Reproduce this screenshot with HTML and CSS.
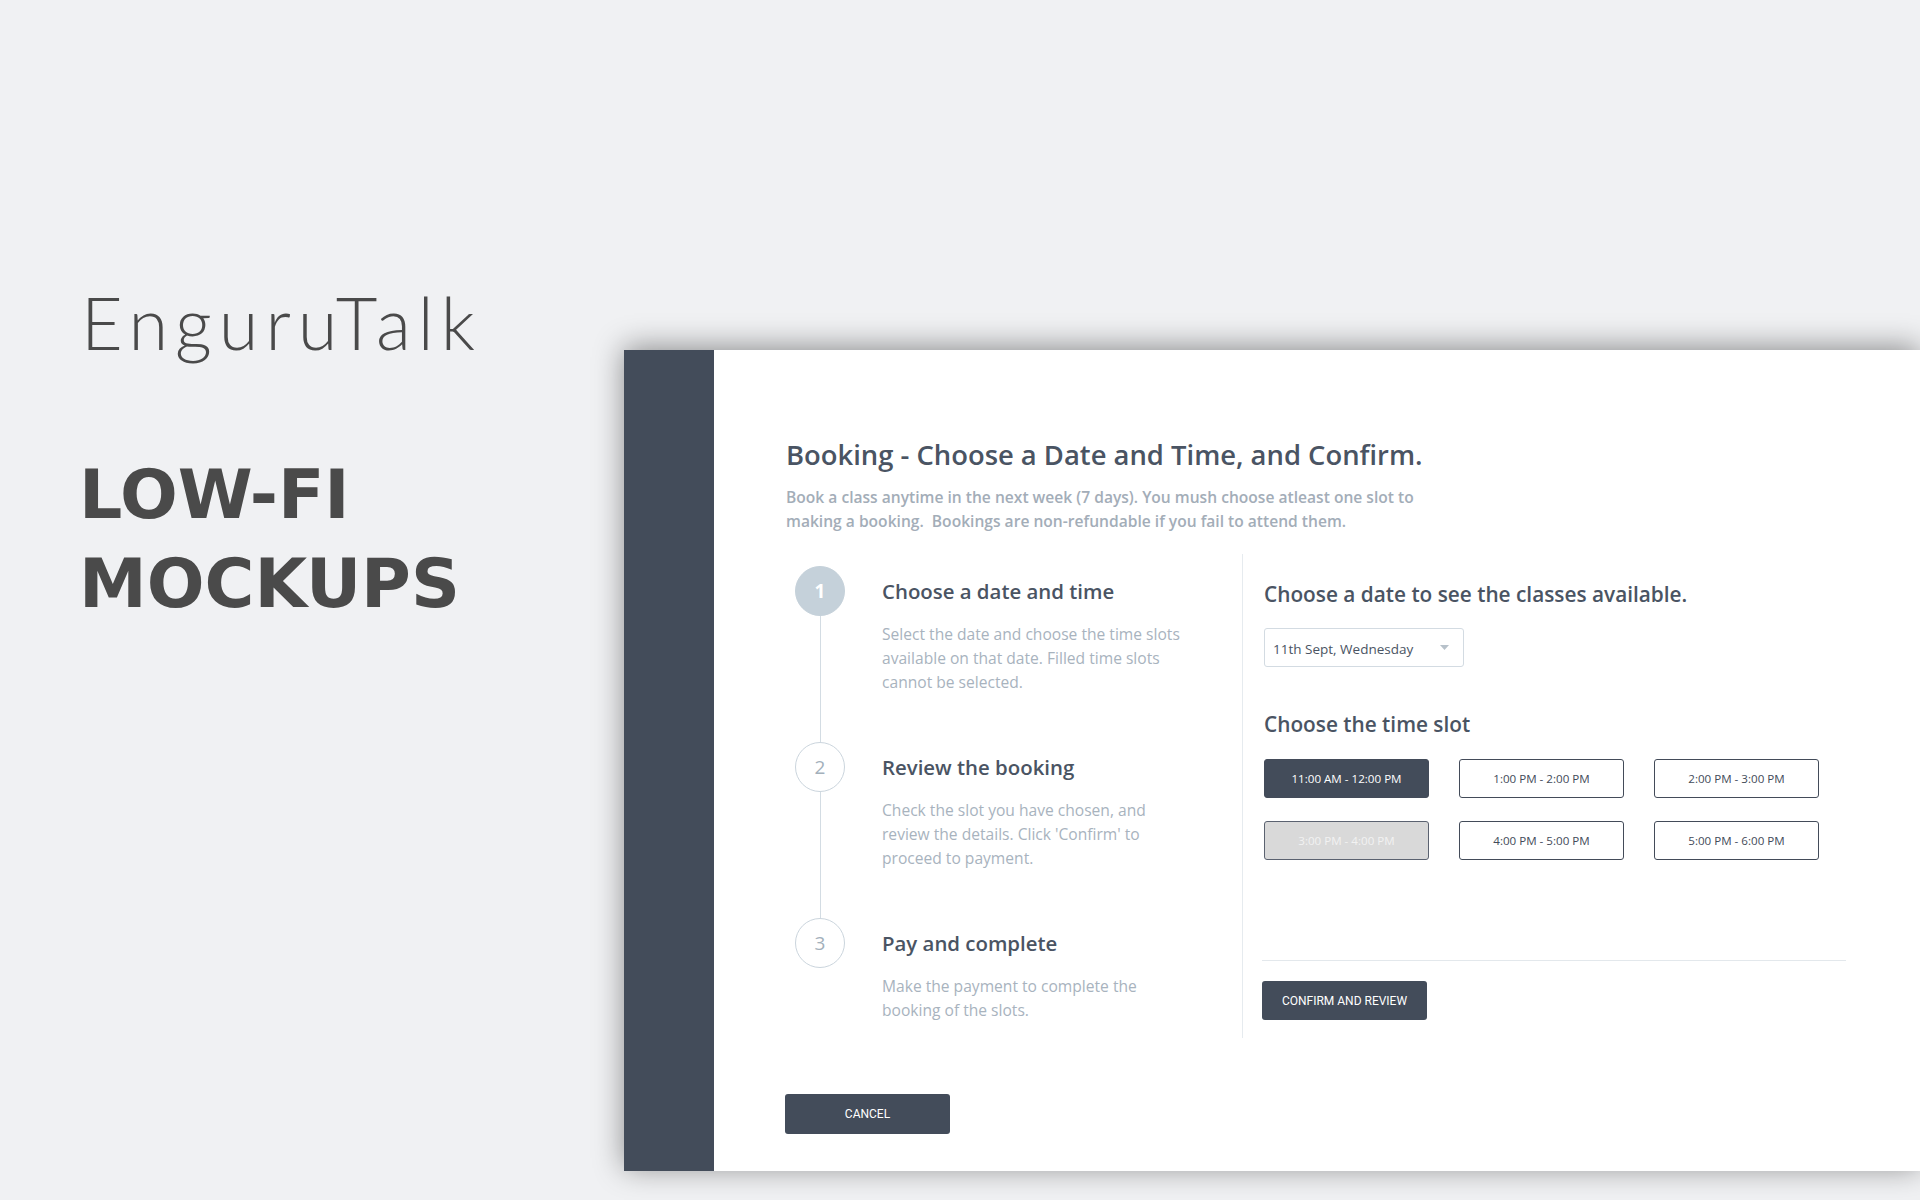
FILE: index.html
```html
<!DOCTYPE html>
<html lang="en">
<head>
<meta charset="utf-8">
<title>EnguruTalk - Low-fi mockups</title>
<link rel="stylesheet" href="styles.css">
</head>
<body>
<div class="page">
  <section class="hero">
    <div class="brand">EnguruTalk</div>
    <h2 class="hero-title">LOW-FI<br>MOCKUPS</h2>
  </section>

  <section class="card">
    <aside class="sidebar"></aside>
    <main class="content">
      <h1 class="title">Booking - Choose a Date and Time, and Confirm.</h1>
      <p class="subtitle">Book a class anytime in the next week (7 days). You mush choose atleast one slot to<br>making a booking.&nbsp; Bookings are non-refundable if you fail to attend them.</p>

      <div class="columns">
        <ol class="steps">
          <li class="step">
            <div class="marker"><span class="circle active">1</span><span class="connector"></span></div>
            <div class="step-text">
              <h3 class="step-title">Choose a date and time</h3>
              <p class="step-desc">Select the date and choose the time slots<br>available on that date. Filled time slots<br>cannot be selected.</p>
            </div>
          </li>
          <li class="step">
            <div class="marker"><span class="circle">2</span><span class="connector"></span></div>
            <div class="step-text">
              <h3 class="step-title">Review the booking</h3>
              <p class="step-desc">Check the slot you have chosen, and<br>review the details. Click 'Confirm' to<br>proceed to payment.</p>
            </div>
          </li>
          <li class="step last">
            <div class="marker"><span class="circle">3</span></div>
            <div class="step-text">
              <h3 class="step-title">Pay and complete</h3>
              <p class="step-desc">Make the payment to complete the<br>booking of the slots.</p>
            </div>
          </li>
        </ol>

        <div class="picker">
          <h2 class="picker-title">Choose a date to see the classes available.</h2>
          <div class="select">
            <span>11th Sept, Wednesday</span>
            <svg class="caret" width="9" height="5" viewBox="0 0 9 5"><path d="M0 0h9L4.5 5z" fill="#b7c1ca"/></svg>
          </div>
          <h2 class="picker-title slot-title">Choose the time slot</h2>
          <div class="slots">
            <button class="slot selected">11:00 AM - 12:00 PM</button>
            <button class="slot">1:00 PM - 2:00 PM</button>
            <button class="slot">2:00 PM - 3:00 PM</button>
            <button class="slot disabled">3:00 PM - 4:00 PM</button>
            <button class="slot">4:00 PM - 5:00 PM</button>
            <button class="slot">5:00 PM - 6:00 PM</button>
          </div>
          <hr class="rule">
          <button class="btn btn-confirm">CONFIRM AND REVIEW</button>
        </div>
      </div>

      <button class="btn btn-cancel">CANCEL</button>
    </main>
  </section>
</div>
</body>
</html>
```

FILE: styles.css
```css
* { box-sizing: border-box; }

html, body {
  margin: 0;
  padding: 0;
}

body {
  background: #f0f1f3;
  font-family: "Open Sans", "Noto Sans", sans-serif;
  overflow: hidden;
}

.page {
  display: flex;
  width: 1920px;
  height: 1200px;
  overflow: hidden;
}

/* ---------- hero ---------- */
.hero {
  flex: 0 0 624px;
  padding: 282px 0 0 79px;
  color: #4a4a4a;
}

.brand {
  margin-left: 2px;
  font-family: "Lato", sans-serif;
  font-weight: 300;
  font-size: 72px;
  line-height: 80px;
  letter-spacing: 7px;
}

.hero-title {
  margin: 88px 0 0;
  font-family: "DejaVu Sans", sans-serif;
  font-weight: 700;
  font-size: 68px;
  line-height: 89px;
  letter-spacing: 0;
}

/* ---------- card ---------- */
.card {
  flex: 1 0 auto;
  align-self: flex-start;
  margin-top: 350px;
  height: 821px;
  display: flex;
  background: #fff;
  box-shadow: 0 -3px 28px rgba(0, 0, 0, 0.42);
}

.sidebar {
  flex: 0 0 90px;
  background: #434c5a;
}

.content {
  flex: 1;
  padding: 87px 0 0 72px;
}

.title {
  margin: 0;
  font-size: 27.4px;
  line-height: 36px;
  font-weight: 600;
  color: #4a5463;
}

.subtitle {
  margin: 12px 0 0;
  font-size: 15.6px;
  line-height: 24px;
  font-weight: 600;
  color: #a3adb8;
}

.columns {
  margin-top: 21px;
  display: flex;
  height: 484px;
}

/* ---------- steps ---------- */
.steps {
  list-style: none;
  margin: 0;
  padding: 12px 0 0 9px;
  width: 456px;
}

.step {
  display: flex;
  gap: 37px;
  height: 176px;
}

.step.last { height: auto; }

.marker {
  display: flex;
  flex-direction: column;
  align-items: center;
  width: 50px;
}

.circle {
  flex: 0 0 50px;
  width: 50px;
  border-radius: 50%;
  border: 1px solid #cbd5dd;
  display: flex;
  align-items: center;
  justify-content: center;
  font-size: 19px;
  color: #a3b0bb;
}

.circle.active {
  background: #c5d1da;
  border-color: #c5d1da;
  color: #fff;
  font-weight: 700;
}

.connector {
  flex: 1;
  width: 1px;
  background: #d3dce3;
}

.step-text {
  padding-top: 11px;
}

.step-title {
  margin: 0;
  font-size: 20.4px;
  line-height: 28px;
  font-weight: 600;
  color: #4a5463;
}

.step-desc {
  margin: 17px 0 0;
  font-size: 15.6px;
  line-height: 24px;
  font-weight: 400;
  color: #a8b3be;
}

/* ---------- picker ---------- */
.picker {
  flex: 1;
  border-left: 1px solid #e6ebef;
  padding: 25px 0 0 21px;
}

.picker-title {
  margin: 0;
  font-size: 20.8px;
  line-height: 30px;
  font-weight: 600;
  color: #4a5463;
}

.select {
  margin-top: 19px;
  width: 200px;
  height: 39px;
  border: 1px solid #d3dbe2;
  border-radius: 3px;
  display: flex;
  align-items: center;
  justify-content: space-between;
  padding: 3px 14px 0 8px;
  font-size: 13.5px;
  color: #4a5463;
}

.caret { margin-bottom: 4px; }

.slot-title { margin-top: 42px; }

.slots {
  margin-top: 20px;
  display: grid;
  grid-template-columns: repeat(3, 165px);
  column-gap: 30px;
  row-gap: 23px;
}

.slot {
  height: 39px;
  border: 1px solid #434b59;
  border-radius: 3px;
  background: #fff;
  font-family: "Open Sans", sans-serif;
  font-size: 11.6px;
  color: #434b59;
  padding: 0;
}

.slot.selected {
  background: #434c5a;
  color: #fff;
}

.slot.disabled {
  background: #d9d9d9;
  color: #f2f2f2;
  border-color: #5b6270;
}

.rule {
  margin: 100px 0 0 -2px;
  width: 584px;
  border: 0;
  height: 1px;
  background: #e3e8ec;
}

.btn {
  display: block;
  border: 0;
  border-radius: 3px;
  background: #434c5a;
  color: #fff;
  font-family: "Roboto", sans-serif;
  font-size: 12px;
  padding: 0;
}

.btn-confirm {
  margin: 20px 0 0 -2px;
  width: 165px;
  height: 39px;
}

.btn-cancel {
  margin: 56px 0 0 -1px;
  width: 165px;
  height: 40px;
}
```
